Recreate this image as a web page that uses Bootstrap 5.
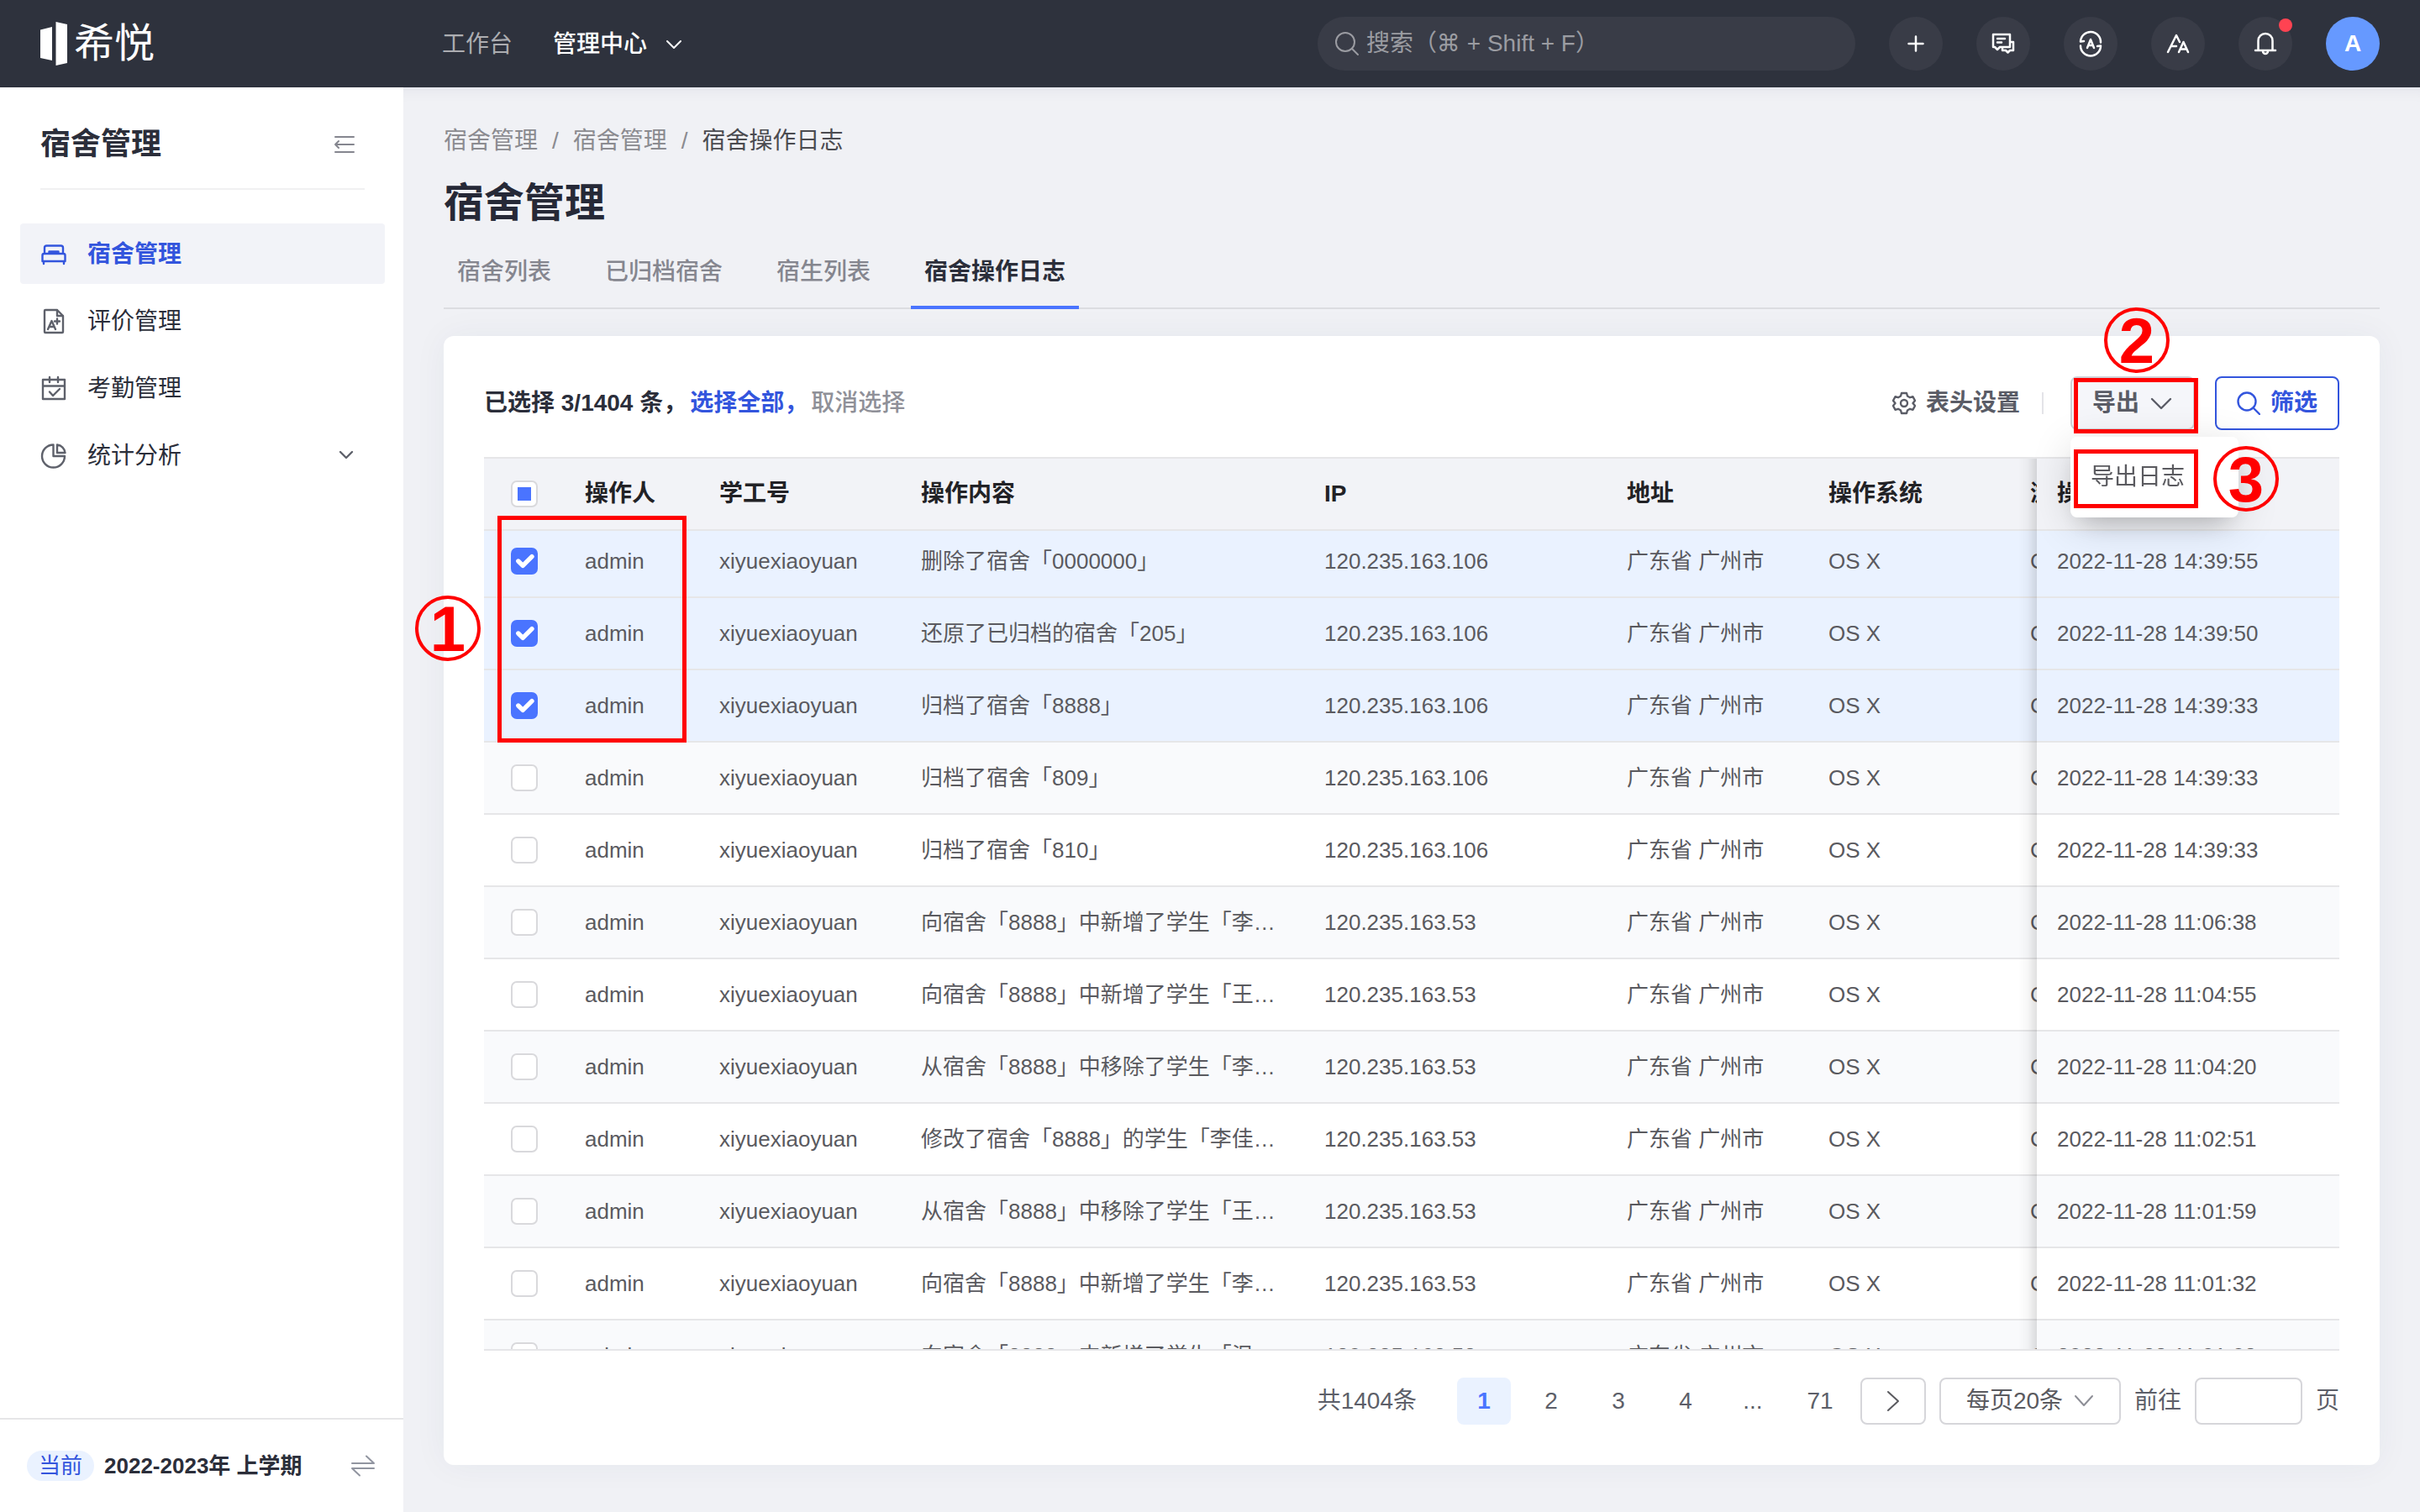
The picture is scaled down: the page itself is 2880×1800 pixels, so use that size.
<!DOCTYPE html>
<html lang="zh-CN">
<head>
<meta charset="utf-8">
<meta name="viewport" content="width=device-width, initial-scale=1">
<title>宿舍管理</title>
<link href="https://cdn.jsdelivr.net/npm/bootstrap@5.3.0/dist/css/bootstrap.min.css" rel="stylesheet">
<style>
:root{--blue:#4a74ff;--deep:#3355dd;--ink:#2b2e3a;--line:#e6e6e8;--red:#ff0000}
body{font-family:"Liberation Sans","Noto Sans CJK SC","DejaVu Sans",sans-serif;font-size:28px;line-height:40px;color:#5a5a5f;background:#f0f1f5}
a{text-decoration:none}
svg{display:block;fill:none;stroke:currentColor;stroke-width:2;stroke-linecap:round;stroke-linejoin:round;flex:none}
.topbar{height:104px;background:#2e323d;padding:0 48px}
.brand-zone{width:478px}
.logo-word{font-size:48px;line-height:64px;color:#fff}
.topnav a{color:#acadb1;padding-top:2px}
.topnav a.on{color:#fff;font-weight:500}
.top-tools{gap:40px}
.search-box{width:640px;height:64px;border-radius:32px;background:#393c47;color:#9b9ca2;padding:0 20px}
.search-box input{font-family:"Liberation Sans","DejaVu Sans","Noto Sans CJK SC",sans-serif;background:none;border:0;outline:0;color:#fff;flex:1;min-width:0;padding:0}
.search-box input::placeholder{color:#9b9ca2;opacity:1}
.round-btn{display:grid;place-items:center;width:64px;height:64px;border-radius:50%;border:0;padding:0;background:#393c47;color:#fff}
.round-btn svg{stroke-width:2.5}
.round-btn.avatar{background:#6699ff;font-weight:700}
.dot{width:16px;height:16px;top:2px;right:0;background:#ff4352}
.side{width:480px;background:#fff}
.side-head{margin:0 46px 0 48px;padding:38px 0 22px;border-bottom:2px solid #f0f0f2;height:122px}
.side-head h2{font-size:36px;line-height:56px;font-weight:700;color:var(--ink);margin:0}
.side-menu{padding:40px 22px 0 24px;gap:8px}
.side-menu a{height:72px;padding:2px 24px 0;border-radius:4px;color:var(--ink);gap:24px}
.side-menu a svg{color:#5e616b;stroke-width:2.4}
.side-menu a.on{background:#f2f3f8;color:var(--deep);font-weight:700}
.side-menu a.on svg{color:var(--deep)}
.side-foot{border-top:2px solid var(--line);height:112px;padding:0 32px;font-size:26px;color:var(--ink)}
.now-tag{background:#eaf2ff;color:var(--deep);line-height:36px;border-radius:18px;padding:0 14px}
.main-area{padding:0 48px 56px;box-shadow:inset 0 20px 20px -20px rgba(30,30,60,.08)}
.crumbs{padding-top:40px;gap:17px;color:#8b8b90;line-height:48px}
.crumbs a{color:#8b8b90}
.crumbs .here{color:#4b4b50}
.main-area h1{font-size:48px;line-height:64px;font-weight:700;color:#262937;margin:18px 0}
.tabs-row{gap:32px;border-bottom:2px solid #dcdde1;height:76px}
.tabs-row a{padding:12px 16px 0;height:76px;color:#85868f;font-weight:500;border-bottom:4px solid transparent}
.tabs-row a.on{color:var(--ink);border-color:var(--blue);font-weight:700}
.panel{margin-top:32px;background:#fff;border-radius:12px;padding:48px;box-shadow:0 0 40px rgba(40,50,90,.05)}
.picked{color:var(--ink);font-weight:700;gap:4px}
.picked a{color:var(--deep)}
.picked a.off{color:#8f9098;font-weight:500}
.tool{height:64px;border-radius:8px;border:2px solid transparent;padding:0 24px;background:none;gap:12px;font-weight:700;color:#5a5c66}
.tool.plain{padding:0;border:0}
.tool.gray{background:#f5f6fa;border-color:#cfd0d6}
.tool.line{border-color:var(--deep);color:var(--deep)}
.tool svg{stroke-width:2.4}
.vline{width:2px;height:26px;background:#e4e4e8;margin:0 32px 0 26px}
.drop{top:72px;left:0;width:200px;height:96px;padding:24px;background:#fff;border-radius:8px;box-shadow:0 10px 50px rgba(0,0,0,.14),0 16px 30px -12px rgba(0,0,0,.2);z-index:5;line-height:48px}
.drop a{color:#5a5a5f;white-space:nowrap}
.hint-box{border:5px solid var(--red);z-index:6;pointer-events:none}
.hint-no{width:78px;height:78px;border:4px solid var(--red);border-radius:50%;color:var(--red);font-weight:700;font-size:76px;line-height:72px;text-align:center;z-index:7}
.box-rows{left:16px;top:70px;width:225px;height:270px}
.no-rows{left:-82px;top:165px}
.box-export{left:4px;top:2px;width:148px;height:66px}
.no-export{left:40px;top:-82px}
.box-log{left:4px;top:87px;width:148px;height:70px}
.no-log{left:170px;top:83px}
.log-wrap{margin-top:32px}
.log-scroll{overflow:hidden;border-top:2px solid var(--line);border-bottom:2px solid var(--line)}
.log-table{border-collapse:separate;border-spacing:0;table-layout:fixed;width:2416px;min-width:100%;font-size:26px;line-height:36px}
.log-table th,.log-table td{height:86px;padding:0 24px;border-bottom:2px solid var(--line);white-space:nowrap;overflow:hidden;text-overflow:ellipsis;vertical-align:middle;background:#fff}
.log-table th{position:sticky;top:0;z-index:2;background:#f2f3f7;color:#222226;font-size:28px;font-weight:700}
.log-table tr:nth-child(even) td{background:#f9fafc}
.log-table tr.picked-row td{background:#eaf2ff}
.log-table th:first-child,.log-table td:first-child{padding-left:32px}
.log-table th:last-child,.log-table td:last-child{position:sticky;right:0;z-index:1;overflow:visible}
.log-table th:last-child{z-index:3}
.log-table th:last-child::before,.log-table td:last-child::before{content:"";position:absolute;top:0;bottom:-2px;left:-22px;width:22px;background:linear-gradient(to left,rgba(0,0,0,.12),rgba(0,0,0,.03) 50%,transparent)}
.log-table .form-check-input{display:block;width:32px;height:32px;margin:0;border:2px solid #d9d9dc;border-radius:7px;background-color:#fff}
.log-table .form-check-input:checked{background-color:var(--blue);border-color:var(--blue);background-size:36px}
.log-table .form-check-input:indeterminate{background:linear-gradient(var(--blue),var(--blue)) center/16px 16px no-repeat #fff;border-color:#d9d9dc}
.pager{margin-top:32px;gap:16px;color:#5d5f69}
.pager .total{margin-right:32px}
.pager .pg{width:64px;height:56px;line-height:56px;text-align:center;color:inherit;border-radius:8px}
.pager .pg.on{background:#eaf2ff;color:var(--blue);font-weight:700}
.pager .framed{height:56px;border:2px solid #d6d6da;border-radius:8px;background:#fff;color:#5a5a5f;padding:0}
.pager .next{width:78px}
.per-page{width:216px}
.per-page select{width:100%;appearance:none;padding-left:30px!important;line-height:52px}
.per-page svg{right:32px;top:16px;color:#8d8e96;pointer-events:none}
.pager input{width:128px}
</style>
</head>
<body class="vh-100 d-flex flex-column overflow-hidden">
<header class="topbar d-flex align-items-center flex-shrink-0">
  <a href="#" class="brand-zone d-flex align-items-center gap-2">
    <svg width="32" height="52" viewBox="0 0 32 52"><path d="M0 9.500L14 6v40L0 43zM18.500 0L32 3v46L18.500 52z" fill="#fff" stroke="none"/></svg>
    <span class="logo-word">希悦</span>
  </a>
  <nav class="topnav d-flex align-items-center flex-grow-1">
    <a href="#">工作台</a>
    <a href="#" class="on d-flex align-items-center ms-5 gap-3">管理中心
      <svg width="32" height="24" viewBox="0 0 32 24" stroke-width="3"><path d="M8 8l8 8 8-8"/></svg></a>
  </nav>
  <div class="top-tools d-flex align-items-center">
    <label class="search-box d-flex align-items-center gap-2">
      <svg width="30" height="30" viewBox="0 0 30 30"><circle cx="13" cy="13" r="11"/><path d="M21 21l7 7"/></svg>
      <input type="text" aria-label="搜索" placeholder="搜索（⌘ + Shift + F）">
    </label>
    <button class="round-btn" aria-label="新建"><svg width="32" height="32" viewBox="0 0 32 32"><path d="M16 7.500v17M7.500 16h17"/></svg></button>
    <button class="round-btn" aria-label="消息"><svg width="32" height="32" viewBox="0 0 32 32"><path d="M4 5h20v15H12l-3 3-3-3H4zM9 10h9M9 14.500h5M24 14h4v10h-4l-2.500 2.500L19 24h-4v-3"/></svg></button>
    <button class="round-btn" aria-label="切换"><svg width="32" height="32" viewBox="0 0 32 32"><path d="M4 13.500A12 12 0 0 1 28 14.500M4 18.500A12 12 0 0 0 28 18.500M4 13.500l4-.5M28 18.500l-4 .5M12 21l4-10 4 10M13.500 18h5"/></svg></button>
    <button class="round-btn" aria-label="字体"><svg width="32" height="32" viewBox="0 0 32 32"><path d="M4 26L14 6l4 8M8 19h6M17 26l5.500-12L28 26M19 22.500h7"/></svg></button>
    <button class="round-btn position-relative" aria-label="通知"><svg width="32" height="32" viewBox="0 0 32 32"><path d="M4 24h24M7.500 24V12.500a8.500 8.500 0 0 1 17 0V24M13 25a3 3 0 0 0 6 0"/></svg><span class="dot position-absolute rounded-circle"></span></button>
    <button class="round-btn avatar">A</button>
  </div>
</header>
<div class="d-flex flex-grow-1 overflow-hidden">
  <aside class="side d-flex flex-column flex-shrink-0">
    <div class="side-head d-flex justify-content-between align-items-center">
      <h2>宿舍管理</h2>
      <button class="btn p-0 border-0 me-2" aria-label="收起"><svg width="32" height="28" viewBox="0 0 32 28" style="color:#85868f"><path d="M5 5h22M5 14h22M5 23h22M9 10l-4 4 4 4"/></svg></button>
    </div>
    <nav class="side-menu d-flex flex-column flex-grow-1">
      <a href="#" class="on d-flex align-items-center"><svg width="32" height="32" viewBox="0 0 32 32"><path d="M5 15V8q0-2.500 2.500-2.500h17Q27 5.500 27 8v7M4.500 15h23q2 0 2 2v7h-27v-7q0-2 2-2zM4 24v3M28 24v3M10.500 15v-2.500h11V15"/></svg>宿舍管理</a>
      <a href="#" class="d-flex align-items-center"><svg width="32" height="32" viewBox="0 0 32 32"><path d="M6 2h14l7 7v19q0 1-1 1H6q-1 0-1-1V3q0-1 1-1zM20 2v7h7M9 25l4.500-10L18 25M11 22h5M20 12.500v6M17 15.500h6"/></svg>评价管理</a>
      <a href="#" class="d-flex align-items-center"><svg width="32" height="32" viewBox="0 0 32 32"><path d="M3 5h26v23H3zM3 12.500h26M11 2v6M21 2v6M11 19.500l4 4.500 8-8"/></svg>考勤管理</a>
      <a href="#" class="d-flex align-items-center"><svg width="32" height="32" viewBox="0 0 32 32"><path d="M15.500 2.500A13.500 13.500 0 1 0 29 16H15.500zM20 2.500V12h9.500A10.500 10.500 0 0 0 20 2.500z"/></svg>统计分析
        <svg class="ms-auto me-2" width="28" height="24" viewBox="0 0 28 24"><path d="M7 7l7 7 7-7"/></svg></a>
    </nav>
    <div class="side-foot d-flex align-items-center">
      <span class="now-tag me-2">当前</span><b class="ms-1">2022-2023年 上学期</b>
      <button class="btn p-0 border-0 ms-auto" aria-label="切换学期"><svg width="32" height="32" viewBox="0 0 32 32" style="color:#9195a0"><path d="M3 13h26L20 4.500M29 19H3l9 8.500"/></svg></button>
    </div>
  </aside>
  <main class="main-area d-flex flex-column flex-grow-1" style="min-width:0">
    <nav class="crumbs d-flex" aria-label="breadcrumb"><a href="#">宿舍管理</a><span>/</span><a href="#">宿舍管理</a><span>/</span><span class="here">宿舍操作日志</span></nav>
    <h1>宿舍管理</h1>
    <nav class="tabs-row d-flex"><a href="#">宿舍列表</a><a href="#">已归档宿舍</a><a href="#">宿生列表</a><a href="#" class="on">宿舍操作日志</a></nav>
    <section class="panel d-flex flex-column flex-grow-1" style="min-height:0">
      <div class="d-flex align-items-center">
        <div class="picked d-flex me-auto"><span>已选择 3/1404 条，</span><a href="#">选择全部，</a><a href="#" class="off">取消选择</a></div>
        <button class="tool plain d-flex align-items-center"><svg width="28" height="28" viewBox="0 0 28 28"><circle cx="14" cy="14" r="4"/><path d="M11 2h6l1 3.500 3 1.700 3.500-1 2.500 4.800-2.500 3 2.500 3-2.500 4.800-3.500-1-3 1.700L17 26h-6l-1-3.500-3-1.700-3.500 1L1 17l2.500-3L1 11l2.500-4.800 3.500 1 3-1.700z"/></svg>表头设置</button>
        <span class="vline"></span>
        <div class="position-relative me-4">
          <button class="tool gray d-flex align-items-center">导出<svg width="28" height="28" viewBox="0 0 28 28"><path d="M3 9l11 11L25 9"/></svg></button>
          <div class="drop position-absolute"><a href="#">导出日志</a></div>
          <span class="hint-box box-export position-absolute"></span><span class="hint-box box-log position-absolute"></span>
          <span class="hint-no no-export position-absolute">2</span><span class="hint-no no-log position-absolute">3</span>
        </div>
        <button class="tool line d-flex align-items-center"><svg width="28" height="28" viewBox="0 0 28 28"><circle cx="12" cy="12" r="10.500"/><path d="M19.500 19.500L27 27"/></svg>筛选</button>
      </div>
      <div class="log-wrap position-relative d-flex flex-column flex-grow-1" style="min-height:0">
        <div class="log-scroll flex-grow-1" id="logScroll">
          <table class="log-table">
            <colgroup><col style="width:96px"><col style="width:160px"><col style="width:240px"><col style="width:480px"><col style="width:360px"><col style="width:240px"><col style="width:240px"><col style="width:240px"><col style="width:360px"></colgroup>
            <thead><tr><th><input class="form-check-input" type="checkbox" id="pickAll" aria-label="全选"></th><th>操作人</th><th>学工号</th><th>操作内容</th><th>IP</th><th>地址</th><th>操作系统</th><th>浏览器</th><th>操作时间</th></tr></thead>
            <tbody id="logRows"></tbody>
          </table>
        </div>
        <span class="hint-box box-rows position-absolute"></span><span class="hint-no no-rows position-absolute">1</span>
      </div>
      <div class="pager d-flex align-items-center justify-content-end">
        <span class="total">共1404条</span>
        <a href="#" class="pg on">1</a><a href="#" class="pg">2</a><a href="#" class="pg">3</a><a href="#" class="pg">4</a><span class="pg">...</span><a href="#" class="pg">71</a>
        <button class="framed next d-flex align-items-center justify-content-center" aria-label="下一页"><svg width="28" height="28" viewBox="0 0 28 28"><path d="M8 3l12 11L8 25"/></svg></button>
        <div class="per-page position-relative"><select class="framed" aria-label="每页条数"><option>每页20条</option><option>每页50条</option></select><svg class="position-absolute" width="24" height="24" viewBox="0 0 24 24"><path d="M2 6l10 11L22 6"/></svg></div>
        <label for="goPage">前往</label><input id="goPage" class="framed" type="text"><span>页</span>
      </div>
    </section>
  </main>
</div>
<script src="https://cdn.jsdelivr.net/npm/bootstrap@5.3.0/dist/js/bootstrap.bundle.min.js"></script>
<script>
const logs = [
  ["删除了宿舍「0000000」","106","14:39:55"],
  ["还原了已归档的宿舍「205」","106","14:39:50"],
  ["归档了宿舍「8888」","106","14:39:33"],
  ["归档了宿舍「809」","106","14:39:33"],
  ["归档了宿舍「810」","106","14:39:33"],
  ["向宿舍「8888」中新增了学生「李佳」","53","11:06:38"],
  ["向宿舍「8888」中新增了学生「王佳」","53","11:04:55"],
  ["从宿舍「8888」中移除了学生「李佳」","53","11:04:20"],
  ["修改了宿舍「8888」的学生「李佳」信息","53","11:02:51"],
  ["从宿舍「8888」中移除了学生「王佳」","53","11:01:59"],
  ["向宿舍「8888」中新增了学生「李佳」","53","11:01:32"],
  ["向宿舍「8888」中新增了学生「温佳」","53","11:01:08"],
  ["向宿舍「8888」中新增了学生「王佳」","53","11:00:41"]
];
document.getElementById("logRows").innerHTML = logs.map(([text, ip, time], i) =>
  `<tr class="${i < 3 ? "picked-row" : ""}"><td><input class="form-check-input" type="checkbox" aria-label="选择第${i + 1}行" ${i < 3 ? "checked" : ""}></td><td>admin</td><td>xiyuexiaoyuan</td><td>${text}</td><td>120.235.163.${ip}</td><td>广东省 广州市</td><td>OS X</td><td>Chrome</td><td>2022-11-28 ${time}</td></tr>`).join("");
document.getElementById("pickAll").indeterminate = true;
document.getElementById("logScroll").scrollTop = 6;
</script>
</body>
</html>
